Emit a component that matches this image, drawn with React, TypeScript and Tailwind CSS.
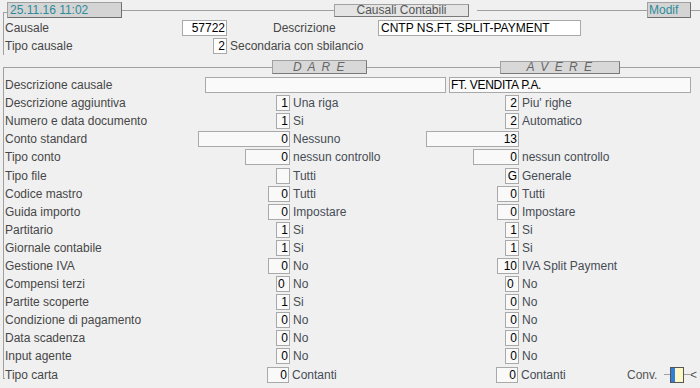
import React from 'react';

type Field = { w: number; v: string; left?: boolean };

interface Row {
  label: string;
  dare: Field;
  dareText: string;
  avere: Field;
  avereText: string;
}

const rows: Row[] = [
  { label: 'Descrizione aggiuntiva', dare: { w: 14, v: '1' }, dareText: 'Una riga', avere: { w: 14, v: '2' }, avereText: "Piu' righe" },
  { label: 'Numero e data documento', dare: { w: 14, v: '1' }, dareText: 'Si', avere: { w: 14, v: '2' }, avereText: 'Automatico' },
  { label: 'Conto standard', dare: { w: 92, v: '0' }, dareText: 'Nessuno', avere: { w: 93, v: '13' }, avereText: '' },
  { label: 'Tipo conto', dare: { w: 45, v: '0' }, dareText: 'nessun controllo', avere: { w: 46, v: '0' }, avereText: 'nessun controllo' },
  { label: 'Tipo file', dare: { w: 14, v: '' }, dareText: 'Tutti', avere: { w: 14, v: 'G' }, avereText: 'Generale' },
  { label: 'Codice mastro', dare: { w: 22, v: '0' }, dareText: 'Tutti', avere: { w: 22, v: '0' }, avereText: 'Tutti' },
  { label: 'Guida importo', dare: { w: 22, v: '0' }, dareText: 'Impostare', avere: { w: 22, v: '0' }, avereText: 'Impostare' },
  { label: 'Partitario', dare: { w: 14, v: '1' }, dareText: 'Si', avere: { w: 14, v: '1' }, avereText: 'Si' },
  { label: 'Giornale contabile', dare: { w: 14, v: '1' }, dareText: 'Si', avere: { w: 14, v: '1' }, avereText: 'Si' },
  { label: 'Gestione IVA', dare: { w: 22, v: '0' }, dareText: 'No', avere: { w: 22, v: '10' }, avereText: 'IVA Split Payment' },
  { label: 'Compensi terzi', dare: { w: 14, v: '0', left: true }, dareText: 'No', avere: { w: 14, v: '0', left: true }, avereText: 'No' },
  { label: 'Partite scoperte', dare: { w: 14, v: '1' }, dareText: 'Si', avere: { w: 14, v: '0' }, avereText: 'No' },
  { label: 'Condizione di pagamento', dare: { w: 14, v: '0' }, dareText: 'No', avere: { w: 14, v: '0' }, avereText: 'No' },
  { label: 'Data scadenza', dare: { w: 14, v: '0' }, dareText: 'No', avere: { w: 14, v: '0' }, avereText: 'No' },
  { label: 'Input agente', dare: { w: 14, v: '0' }, dareText: 'No', avere: { w: 14, v: '0' }, avereText: 'No' },
];

function Box({ f, white }: { f: Field; white?: boolean }) {
  return (
    <div
      className={`h-[16px] flex-none flex items-center border border-[#a9a9a9] leading-none text-black ${
        white ? 'bg-white' : 'bg-[#f9f9f9]'
      } ${f.left ? 'justify-start pl-[1px]' : 'justify-end pr-[1px]'}`}
      style={{ width: f.w }}
    >
      {f.v}
    </div>
  );
}

function Line({ w }: { w?: number }) {
  return (
    <div className={`h-px bg-[#a0a0a0] ${w ? 'flex-none' : 'flex-1'}`} style={w ? { width: w } : undefined} />
  );
}

export default function App() {
  return (
    <div
      className="w-[700px] h-[388px] overflow-hidden bg-[#f0f0f0] text-[12px] text-[#474747]"
      style={{ fontFamily: '"Liberation Sans", Arial, sans-serif' }}
    >
      {/* Title bar */}
      <div className="flex items-center h-[16px] mt-[2px]">
        <div className="ml-[3px] w-[4px] h-[6px] self-end border-l border-t border-[#a0a0a0]" />
        <div className="w-[115px] h-[16px] flex-none flex items-center pl-[2px] bg-[#d4d4d4] border border-[#a0a0a0] border-r-[#6f6f6f] border-b-[#6f6f6f] text-[#2e8b9b] leading-none">
          25.11.16 11:02
        </div>
        <Line w={212} />
        <div className="w-[135px] h-[13px] flex-none flex items-center justify-center bg-[#e4e4e4] border border-[#a0a0a0] border-r-[#7a7a7a] border-b-[#7a7a7a] text-[#555] leading-none">
          Causali Contabili
        </div>
        <div className="w-[8px] flex-none" />
        <Line w={170} />
        <div className="w-[44px] h-[16px] flex-none flex items-center pl-[1px] bg-[#d4d4d4] border border-[#a0a0a0] border-r-[#6f6f6f] border-b-[#6f6f6f] text-[#2e8b9b] leading-none">
          Modif
        </div>
        <Line />
      </div>

      {/* Causale */}
      <div className="ml-[3px] pt-[1px] border-l border-[#a0a0a0]">
        <div className="flex items-center h-[18px]">
          <div className="w-[178px] flex-none pl-[1px]">Causale</div>
          <Box f={{ w: 45, v: '57722' }} white />
          <div className="w-[46px] flex-none" />
          <div className="w-[105px] flex-none">Descrizione</div>
          <div className="w-[203px] h-[16px] flex-none flex items-center pl-[2px] bg-white border border-[#a9a9a9] text-black leading-none">
            CNTP NS.FT. SPLIT-PAYMENT
          </div>
        </div>
        <div className="flex items-center h-[18px]">
          <div className="w-[209px] flex-none pl-[1px]">Tipo causale</div>
          <Box f={{ w: 14, v: '2' }} white />
          <div className="pl-[3px]">Secondaria con sbilancio</div>
        </div>
      </div>

      {/* DARE / AVERE header */}
      <div className="flex items-center h-[14px] mt-[5px]">
        <div className="ml-[3px] w-[269px] h-[7px] flex-none self-end border-l border-t border-[#a0a0a0]" />
        <div className="w-[95px] h-[14px] flex-none flex items-center justify-center bg-[#d8d8d8] border border-[#a0a0a0] border-r-[#7a7a7a] border-b-[#7a7a7a] italic text-[#666] tracking-[1.5px] leading-none">
          D A R E
        </div>
        <Line w={133} />
        <div className="w-[120px] h-[13px] flex-none flex items-center justify-center bg-[#d8d8d8] border border-[#a0a0a0] border-r-[#7a7a7a] border-b-[#7a7a7a] italic text-[#666] tracking-[1.5px] leading-none">
          A V E R E
        </div>
        <Line />
      </div>

      <div className="ml-[3px]">
        <div className="border-l border-[#a0a0a0] pt-[2px]">
          <div className="flex items-center h-[18.1px]">
            <div className="w-[201px] flex-none pl-[1px]">Descrizione causale</div>
            <div className="w-[241px] h-[16px] flex-none bg-[#fafafa] border border-[#a9a9a9]" />
            <div className="w-[3px] flex-none" />
            <div className="w-[242px] h-[16px] flex-none flex items-center pl-[1px] bg-[#fafafa] border border-[#a9a9a9] text-black leading-none tracking-[-0.3px]">
              FT. VENDITA P.A.
            </div>
          </div>

          {rows.map((r) => (
            <div key={r.label} className="flex items-center h-[18.1px]">
              <div className="w-[286px] flex-none flex items-center justify-between pl-[1px]">
                <span>{r.label}</span>
                <Box f={r.dare} />
              </div>
              <div className="w-[229px] flex-none flex items-center justify-between">
                <span className="pl-[3px] text-[#464c55]">{r.dareText}</span>
                <Box f={r.avere} />
              </div>
              <span className="pl-[3px] text-[#464c55]">{r.avereText}</span>
            </div>
          ))}
        </div>

        {/* Tipo carta */}
        <div className="flex items-center h-[18.1px]">
          <div className="w-[2px] h-[13px] flex-none self-start border-l border-b border-[#a0a0a0]" />
          <div className="w-[284px] flex-none flex items-center justify-between">
            <span>Tipo carta</span>
            <Box f={{ w: 22, v: '0' }} />
          </div>
          <div className="w-[229px] flex-none flex items-center justify-between">
            <span className="pl-[3px] text-[#464c55]">Contanti</span>
            <Box f={{ w: 22, v: '0' }} />
          </div>
          <span className="w-[109px] flex-none pl-[3px] text-[#464c55]">Contanti</span>
          <span className="w-[37px] flex-none text-[#555]">Conv.</span>
          <Line w={6} />
          <div className="w-[14px] h-[16px] flex-none flex border border-[#555] bg-[#fff6c6]">
            <div className="w-[4px] h-full bg-[#2f7fd8]" />
          </div>
          <Line w={6} />
          <span className="text-[#555]">&lt;</span>
        </div>
      </div>
    </div>
  );
}
